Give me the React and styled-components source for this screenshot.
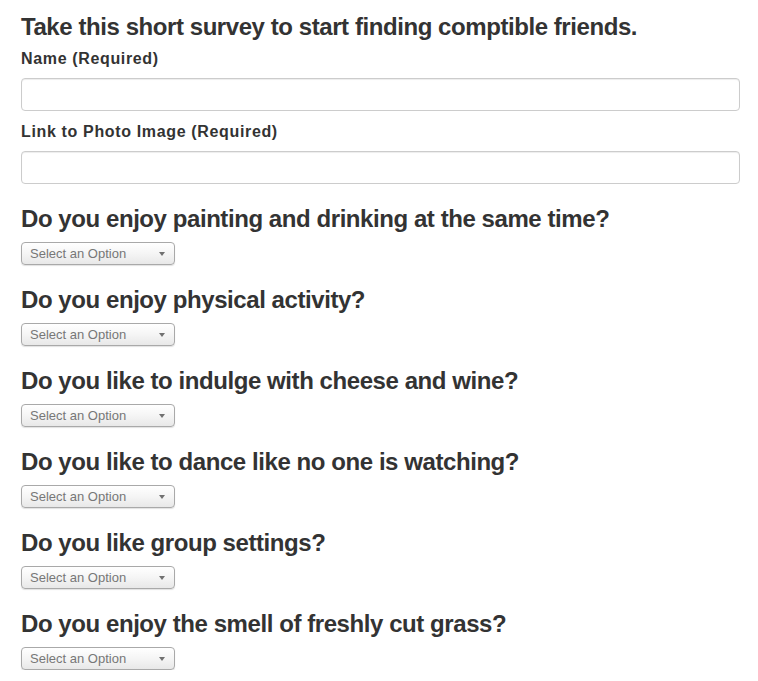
import React from "react";
import styled, { createGlobalStyle } from "styled-components";

const Global = createGlobalStyle`
  html, body { margin: 0; padding: 0; background: #fff; }
  body { font-family: "Liberation Sans", Arial, sans-serif; color: #333; }
  * { box-sizing: border-box; }
`;

const Page = styled.form`
  padding: 14px 18px 0 21px;
  display: flex;
  flex-direction: column;
`;

const Title = styled.h3`
  margin: 0 0 8px;
  font-size: 24px;
  line-height: 26px;
  font-weight: 700;
  letter-spacing: -0.43px;
  color: #333;
`;

const Group = styled.div`
  display: flex;
  flex-direction: column;
  margin-top: ${(p) => (p.$first ? "0" : "10px")};
`;

const Label = styled.label`
  font-size: 16px;
  line-height: 22px;
  font-weight: 700;
  letter-spacing: 0.65px;
  margin-bottom: 8px;
  color: #333;
`;

const TextInput = styled.input`
  height: 33px;
  width: 100%;
  border: 1px solid #ccc;
  border-radius: 4px;
  box-shadow: inset 0 1px 1px rgba(0, 0, 0, 0.075);
  padding: 6px 12px;
  font: 14px "Liberation Sans", Arial, sans-serif;
`;

const Question = styled.div`
  display: flex;
  flex-direction: column;
  align-items: flex-start;
  margin-top: 22px;
`;

const QTitle = styled.h3`
  margin: 0 0 10px;
  font-size: 24px;
  line-height: 26px;
  font-weight: 700;
  letter-spacing: -0.43px;
  color: #333;
`;

const SelectWrap = styled.div`
  position: relative;
  width: 154px;
  height: 23px;
`;

const Select = styled.select`
  appearance: none;
  -webkit-appearance: none;
  width: 100%;
  height: 100%;
  border: 1px solid #a9a9a9;
  border-radius: 4px;
  background: linear-gradient(#ffffff, #f5f5f5 50%, #e8e8e8);
  box-shadow: 0 1px 1px rgba(0, 0, 0, 0.12);
  padding: 0 0 0 8px;
  font: 13px "Liberation Sans", Arial, sans-serif;
  color: #777;
  outline: none;
`;

const Arrow = styled.svg`
  position: absolute;
  right: 10px;
  top: 10px;
  pointer-events: none;
`;

const questions = [
  "Do you enjoy painting and drinking at the same time?",
  "Do you enjoy physical activity?",
  "Do you like to indulge with cheese and wine?",
  "Do you like to dance like no one is watching?",
  "Do you like group settings?",
  "Do you enjoy the smell of freshly cut grass?",
];

function Dropdown() {
  return (
    <SelectWrap>
      <Select defaultValue="">
        <option value="">Select an Option</option>
        <option value="1">1 (Strongly Disagree)</option>
        <option value="2">2</option>
        <option value="3">3</option>
        <option value="4">4</option>
        <option value="5">5 (Strongly Agree)</option>
      </Select>
      <Arrow width="6" height="4" viewBox="0 0 6 4">
        <path d="M0 0 H6 L3 4 Z" fill="#707070" />
      </Arrow>
    </SelectWrap>
  );
}

export default function App() {
  return (
    <>
      <Global />
      <Page>
        <Title>Take this short survey to start finding comptible friends.</Title>
        <Group $first>
          <Label>Name (Required)</Label>
          <TextInput type="text" />
        </Group>
        <Group>
          <Label>Link to Photo Image (Required)</Label>
          <TextInput type="text" />
        </Group>
        {questions.map((q) => (
          <Question key={q}>
            <QTitle>{q}</QTitle>
            <Dropdown />
          </Question>
        ))}
      </Page>
    </>
  );
}
